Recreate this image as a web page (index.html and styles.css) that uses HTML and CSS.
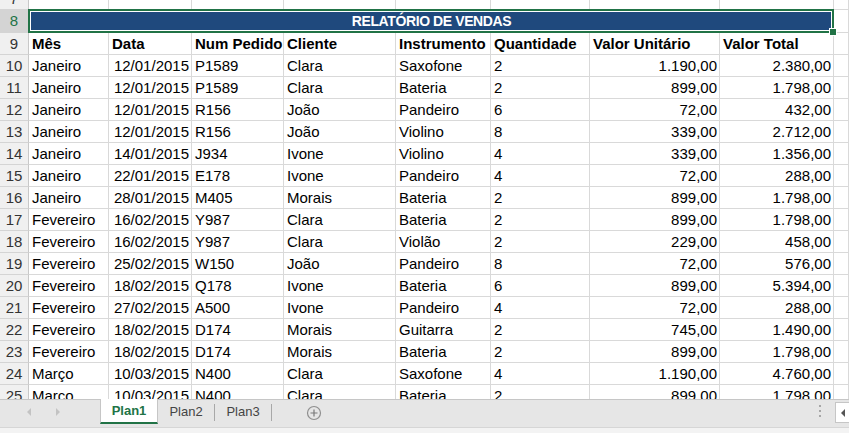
FILE: index.html
```html
<!DOCTYPE html>
<html lang="pt">
<head>
<meta charset="utf-8">
<title>Relatório de Vendas</title>
<link rel="stylesheet" href="styles.css">
</head>
<body>
<div class="app">
  <div class="sheet">
    <div class="row r7">
      <div class="cell hdr">7</div><div class="cell"></div><div class="cell"></div><div class="cell"></div><div class="cell"></div><div class="cell"></div><div class="cell"></div><div class="cell"></div><div class="cell"></div><div class="cell"></div>
    </div>
    <div class="row r8">
      <div class="cell hdr sel">8</div>
      <div class="cell title">RELATÓRIO DE VENDAS<span class="selbox"><span class="handle"></span></span></div>
      <div class="cell"></div>
    </div>
    <div class="row head">
      <div class="cell hdr">9</div><div class="cell">Mês</div><div class="cell">Data</div><div class="cell">Num Pedido</div><div class="cell">Cliente</div><div class="cell">Instrumento</div><div class="cell">Quantidade</div><div class="cell">Valor Unitário</div><div class="cell">Valor Total</div><div class="cell"></div>
    </div>
    <div class="row"><div class="cell hdr">10</div><div class="cell">Janeiro</div><div class="cell num">12/01/2015</div><div class="cell">P1589</div><div class="cell">Clara</div><div class="cell">Saxofone</div><div class="cell">2</div><div class="cell num">1.190,00</div><div class="cell num">2.380,00</div><div class="cell"></div></div>
    <div class="row"><div class="cell hdr">11</div><div class="cell">Janeiro</div><div class="cell num">12/01/2015</div><div class="cell">P1589</div><div class="cell">Clara</div><div class="cell">Bateria</div><div class="cell">2</div><div class="cell num">899,00</div><div class="cell num">1.798,00</div><div class="cell"></div></div>
    <div class="row"><div class="cell hdr">12</div><div class="cell">Janeiro</div><div class="cell num">12/01/2015</div><div class="cell">R156</div><div class="cell">João</div><div class="cell">Pandeiro</div><div class="cell">6</div><div class="cell num">72,00</div><div class="cell num">432,00</div><div class="cell"></div></div>
    <div class="row"><div class="cell hdr">13</div><div class="cell">Janeiro</div><div class="cell num">12/01/2015</div><div class="cell">R156</div><div class="cell">João</div><div class="cell">Violino</div><div class="cell">8</div><div class="cell num">339,00</div><div class="cell num">2.712,00</div><div class="cell"></div></div>
    <div class="row"><div class="cell hdr">14</div><div class="cell">Janeiro</div><div class="cell num">14/01/2015</div><div class="cell">J934</div><div class="cell">Ivone</div><div class="cell">Violino</div><div class="cell">4</div><div class="cell num">339,00</div><div class="cell num">1.356,00</div><div class="cell"></div></div>
    <div class="row"><div class="cell hdr">15</div><div class="cell">Janeiro</div><div class="cell num">22/01/2015</div><div class="cell">E178</div><div class="cell">Ivone</div><div class="cell">Pandeiro</div><div class="cell">4</div><div class="cell num">72,00</div><div class="cell num">288,00</div><div class="cell"></div></div>
    <div class="row"><div class="cell hdr">16</div><div class="cell">Janeiro</div><div class="cell num">28/01/2015</div><div class="cell">M405</div><div class="cell">Morais</div><div class="cell">Bateria</div><div class="cell">2</div><div class="cell num">899,00</div><div class="cell num">1.798,00</div><div class="cell"></div></div>
    <div class="row"><div class="cell hdr">17</div><div class="cell">Fevereiro</div><div class="cell num">16/02/2015</div><div class="cell">Y987</div><div class="cell">Clara</div><div class="cell">Bateria</div><div class="cell">2</div><div class="cell num">899,00</div><div class="cell num">1.798,00</div><div class="cell"></div></div>
    <div class="row"><div class="cell hdr">18</div><div class="cell">Fevereiro</div><div class="cell num">16/02/2015</div><div class="cell">Y987</div><div class="cell">Clara</div><div class="cell">Violão</div><div class="cell">2</div><div class="cell num">229,00</div><div class="cell num">458,00</div><div class="cell"></div></div>
    <div class="row"><div class="cell hdr">19</div><div class="cell">Fevereiro</div><div class="cell num">25/02/2015</div><div class="cell">W150</div><div class="cell">João</div><div class="cell">Pandeiro</div><div class="cell">8</div><div class="cell num">72,00</div><div class="cell num">576,00</div><div class="cell"></div></div>
    <div class="row"><div class="cell hdr">20</div><div class="cell">Fevereiro</div><div class="cell num">18/02/2015</div><div class="cell">Q178</div><div class="cell">Ivone</div><div class="cell">Bateria</div><div class="cell">6</div><div class="cell num">899,00</div><div class="cell num">5.394,00</div><div class="cell"></div></div>
    <div class="row"><div class="cell hdr">21</div><div class="cell">Fevereiro</div><div class="cell num">27/02/2015</div><div class="cell">A500</div><div class="cell">Ivone</div><div class="cell">Pandeiro</div><div class="cell">4</div><div class="cell num">72,00</div><div class="cell num">288,00</div><div class="cell"></div></div>
    <div class="row"><div class="cell hdr">22</div><div class="cell">Fevereiro</div><div class="cell num">18/02/2015</div><div class="cell">D174</div><div class="cell">Morais</div><div class="cell">Guitarra</div><div class="cell">2</div><div class="cell num">745,00</div><div class="cell num">1.490,00</div><div class="cell"></div></div>
    <div class="row"><div class="cell hdr">23</div><div class="cell">Fevereiro</div><div class="cell num">18/02/2015</div><div class="cell">D174</div><div class="cell">Morais</div><div class="cell">Bateria</div><div class="cell">2</div><div class="cell num">899,00</div><div class="cell num">1.798,00</div><div class="cell"></div></div>
    <div class="row"><div class="cell hdr">24</div><div class="cell">Março</div><div class="cell num">10/03/2015</div><div class="cell">N400</div><div class="cell">Clara</div><div class="cell">Saxofone</div><div class="cell">4</div><div class="cell num">1.190,00</div><div class="cell num">4.760,00</div><div class="cell"></div></div>
    <div class="row"><div class="cell hdr">25</div><div class="cell">Março</div><div class="cell num">10/03/2015</div><div class="cell">N400</div><div class="cell">Clara</div><div class="cell">Bateria</div><div class="cell">2</div><div class="cell num">899,00</div><div class="cell num">1.798,00</div><div class="cell"></div></div>
  </div>
  <div class="tabbar">
    <div class="nav">
      <svg class="arrow" width="8" height="10" viewBox="0 0 8 10"><path d="M6 1 L2 5 L6 9 Z" fill="#c3c3c3"/></svg>
      <svg class="arrow" width="8" height="10" viewBox="0 0 8 10"><path d="M2 1 L6 5 L2 9 Z" fill="#c3c3c3"/></svg>
    </div>
    <div class="tab active">Plan1</div>
    <div class="tab">Plan2</div>
    <div class="tab">Plan3</div>
    <div class="add">
      <svg width="16" height="16" viewBox="0 0 16 16"><circle cx="8" cy="8" r="6.5" fill="none" stroke="#8f8f8f" stroke-width="1.2"/><path d="M8 4.5 V11.5 M4.5 8 H11.5" stroke="#7a7a7a" stroke-width="1.2"/></svg>
    </div>
    <div class="spacer"></div>
    <div class="dots"><span></span><span></span><span></span></div>
    <div class="scrollbtn">
      <svg width="6" height="10" viewBox="0 0 6 10"><path d="M5 1 L1 5 L5 9 Z" fill="#555"/></svg>
    </div>
  </div>
  <div class="status"></div>
</div>
</body>
</html>
```

FILE: styles.css
```css
html, body {
  margin: 0;
  padding: 0;
}
body {
  width: 849px;
  height: 433px;
  overflow: hidden;
  background: #ffffff;
  font-family: "Liberation Sans", Arial, sans-serif;
  font-size: 15px;
  color: #000;
}
.app {
  display: flex;
  flex-direction: column;
  height: 433px;
}
.sheet {
  height: 399px;
  overflow: hidden;
  flex: none;
}
.row {
  display: grid;
  grid-template-columns: 29px 80px 83px 92px 112px 95px 99px 130px 114px 1fr;
  height: 22px;
}
.cell {
  box-sizing: border-box;
  border-right: 1px solid #d9d9d9;
  border-bottom: 1px solid #d9d9d9;
  padding: 0 2px 0 3px;
  line-height: 21px;
  white-space: nowrap;
  overflow: hidden;
}
.num {
  text-align: right;
}
.hdr {
  background: #f0f0f0;
  border-right-color: #c8c8c8;
  border-bottom-color: #d4d4d4;
  text-align: center;
  padding: 0;
  color: #333;
}
.r7 {
  height: 10px;
}
.r7 .cell {
  line-height: 9px;
  display: flex;
  align-items: flex-end;
  justify-content: center;
}
.r7 .hdr {
  line-height: 21px;
  overflow: hidden;
}
.r8 {
  height: 23px;
}
.r8 .cell {
  line-height: 22px;
}
.sel {
  background: #d4d4d4;
  color: #217346;
}
.title {
  grid-column: 2 / 10;
  position: relative;
  overflow: visible;
  background: #1f497d;
  color: #fff;
  font-weight: bold;
  font-size: 14px;
  letter-spacing: -0.4px;
  text-align: center;
  border-bottom-color: #1f497d;
}
.selbox {
  position: absolute;
  left: -1px;
  top: -1px;
  right: -1px;
  bottom: -1px;
  border: 2px solid #217346;
  box-shadow: inset 0 0 0 1px #ffffff;
  pointer-events: none;
}
.handle {
  position: absolute;
  right: -5px;
  bottom: -5px;
  width: 6px;
  height: 6px;
  background: #217346;
  border: 1px solid #ffffff;
}
.head .cell {
  font-weight: bold;
}
.head .hdr {
  font-weight: normal;
}
.tabbar {
  height: 28px;
  box-sizing: border-box;
  background: #e6e6e6;
  border-top: 1px solid #c6c6c6;
  display: flex;
  align-items: flex-start;
  font-size: 13px;
  color: #444;
}
.nav {
  width: 100px;
  height: 23px;
  display: flex;
  align-items: center;
  padding-left: 25px;
  gap: 21px;
  box-sizing: border-box;
}
.arrow {
  display: block;
}
.tab {
  position: relative;
  width: 57px;
  height: 23px;
  line-height: 23px;
  text-align: center;
  box-sizing: border-box;
  border-right: 1px solid transparent;
}
.tab::after {
  content: "";
  position: absolute;
  right: -1px;
  top: 4px;
  height: 17px;
  border-right: 1px solid #a8a8a8;
}
.tab.active {
  width: 58px;
  background: #ffffff;
  color: #217346;
  font-weight: bold;
  border-left: 1px solid #c6c6c6;
  border-right: 1px solid #c6c6c6;
  border-bottom: 2px solid #217346;
  margin-top: -1px;
  height: 25px;
  line-height: 23px;
}
.tab.active::after {
  display: none;
}
.add {
  margin-left: 34px;
  margin-top: 5px;
  width: 16px;
  height: 16px;
}
.add svg {
  display: block;
}
.spacer {
  flex: 1;
}
.dots {
  display: flex;
  flex-direction: column;
  gap: 3px;
  margin-top: 5px;
  margin-right: 14px;
}
.dots span {
  width: 2px;
  height: 2px;
  background: #a6a6a6;
}
.scrollbtn {
  width: 14px;
  height: 21px;
  margin-top: 2px;
  background: #ffffff;
  border: 1px solid #c6c6c6;
  border-right: none;
  box-sizing: border-box;
  display: flex;
  align-items: center;
  padding-left: 4px;
}
.scrollbtn svg {
  display: block;
}
.status {
  flex: 1;
  background: #f3f3f3;
  border-top: 1px solid #d6d6d6;
}
```
